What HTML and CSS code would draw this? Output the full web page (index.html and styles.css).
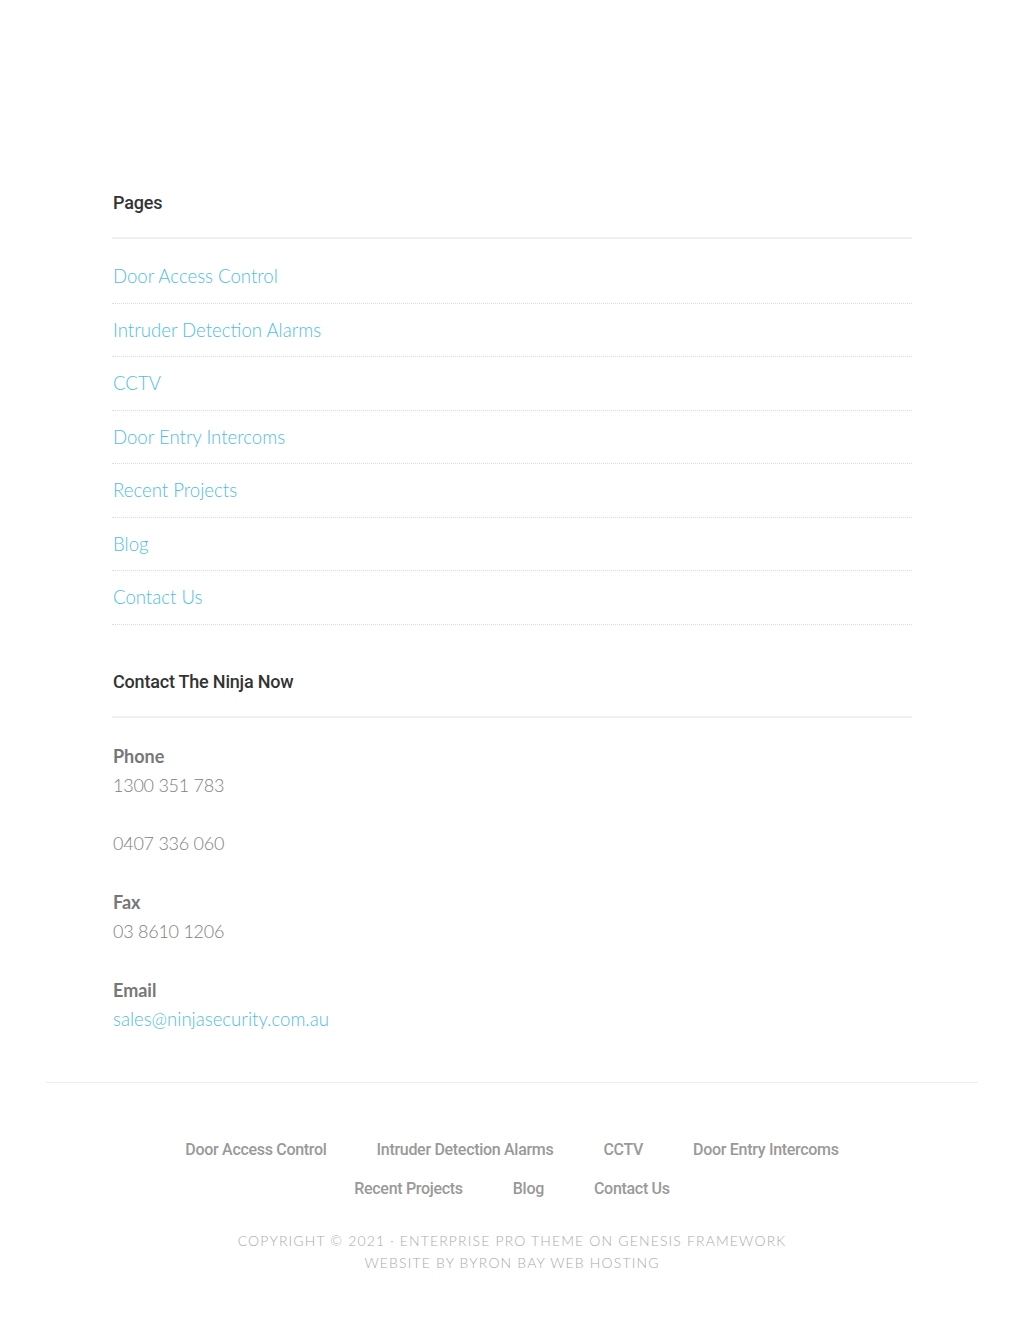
FILE: index.html
```html
<!DOCTYPE html>
<html lang="en">
<head>
<meta charset="utf-8">
<title>Ninja Security</title>
<link rel="stylesheet" href="styles.css">
</head>
<body>
<div class="site">
  <div class="widgets">
    <section class="widget">
      <h4 class="widget-title">Pages</h4>
      <ul class="page-list">
        <li><a href="#">Door Access Control</a></li>
        <li><a href="#">Intruder Detection Alarms</a></li>
        <li><a href="#">CCTV</a></li>
        <li><a href="#">Door Entry Intercoms</a></li>
        <li><a href="#">Recent Projects</a></li>
        <li><a href="#">Blog</a></li>
        <li><a href="#">Contact Us</a></li>
      </ul>
    </section>
    <section class="widget">
      <h4 class="widget-title">Contact The Ninja Now</h4>
      <div class="contact">
        <p><strong>Phone</strong><br><span class="num">1300 351 783</span><br><br><span class="num">0407 336 060</span></p>
        <p><strong>Fax</strong><br><span class="num">03 8610 1206</span></p>
        <p><strong>Email</strong><br><a href="#">sales@ninjasecurity.com.au</a></p>
      </div>
    </section>
  </div>
  <footer class="site-footer">
    <nav class="footer-nav">
      <ul>
        <li><a href="#">Door Access Control</a></li>
        <li><a href="#">Intruder Detection Alarms</a></li>
        <li><a href="#">CCTV</a></li>
        <li><a href="#">Door Entry Intercoms</a></li>
        <li><a href="#">Recent Projects</a></li>
        <li><a href="#">Blog</a></li>
        <li><a href="#">Contact Us</a></li>
      </ul>
    </nav>
    <p class="copyright">Copyright © 2021 · <a href="#">Enterprise Pro Theme</a> on <a href="#">Genesis Framework</a><br>Website by <a href="#">Byron Bay Web Hosting</a></p>
  </footer>
</div>
</body>
</html>
```

FILE: styles.css
```css
* { box-sizing: border-box; }
html, body { margin: 0; padding: 0; background: #fff; }
body {
  font-family: "Lato", "Liberation Sans", sans-serif;
  font-weight: 300;
  font-size: 18.6px;
  color: #777;
}
a { text-decoration: none; }
.site { padding-top: 192px; }
.widgets {
  width: 800px;
  margin: 0 auto;
  padding-left: 1px;
}
.widget { margin-bottom: 46px; }
.widget:last-child { margin-bottom: 48px; }
.widget-title {
  font-family: "Roboto", "Liberation Sans", sans-serif;
  font-weight: 500;
  font-size: 18px;
  line-height: 22px;
  letter-spacing: -0.2px;
  color: #333;
  margin: 0 0 0 -1px;
  padding-left: 1px;
  padding-bottom: 23px;
  border-bottom: 2px solid #f0f0f0;
}
.page-list {
  list-style: none;
  margin: 11px 0 0 -1px;
  padding: 0;
}
.page-list li {
  padding: 16px 0 15px 1px;
  line-height: 21.5px;
  border-bottom: 1px dotted #ddd;
}
.page-list a { color: #4fbde5; }
.contact { padding-top: 24px; }
.contact p {
  margin: 0 0 30px;
  line-height: 29px;
}
.contact p:last-child { margin-bottom: 0; }
.contact strong { font-weight: 700; color: #777; font-size: 18px; }
.contact .num { font-size: 18px; letter-spacing: -0.25px; color: #808080; }
.contact a { color: #4fbde5; }
.site-footer {
  width: 932px;
  margin: 0 auto;
  border-top: 1px solid #eee;
  padding-top: 54px;
  text-align: center;
}
.footer-nav ul {
  list-style: none;
  margin: 0 auto;
  padding: 0;
  display: flex;
  flex-wrap: wrap;
  justify-content: center;
  width: 760px;
  row-gap: 15px;
}
.footer-nav li { padding: 0 25px; line-height: 22px; }
.footer-nav a {
  font-family: "Roboto", "Liberation Sans", sans-serif;
  font-weight: 500;
  font-size: 16px;
  letter-spacing: -0.3px;
  color: #999;
}
.copyright {
  margin: 30px 0 0;
  font-size: 14px;
  line-height: 22px;
  letter-spacing: 1.15px;
  text-transform: uppercase;
  color: #aaa;
}
.copyright a { color: #aaa; }
```
